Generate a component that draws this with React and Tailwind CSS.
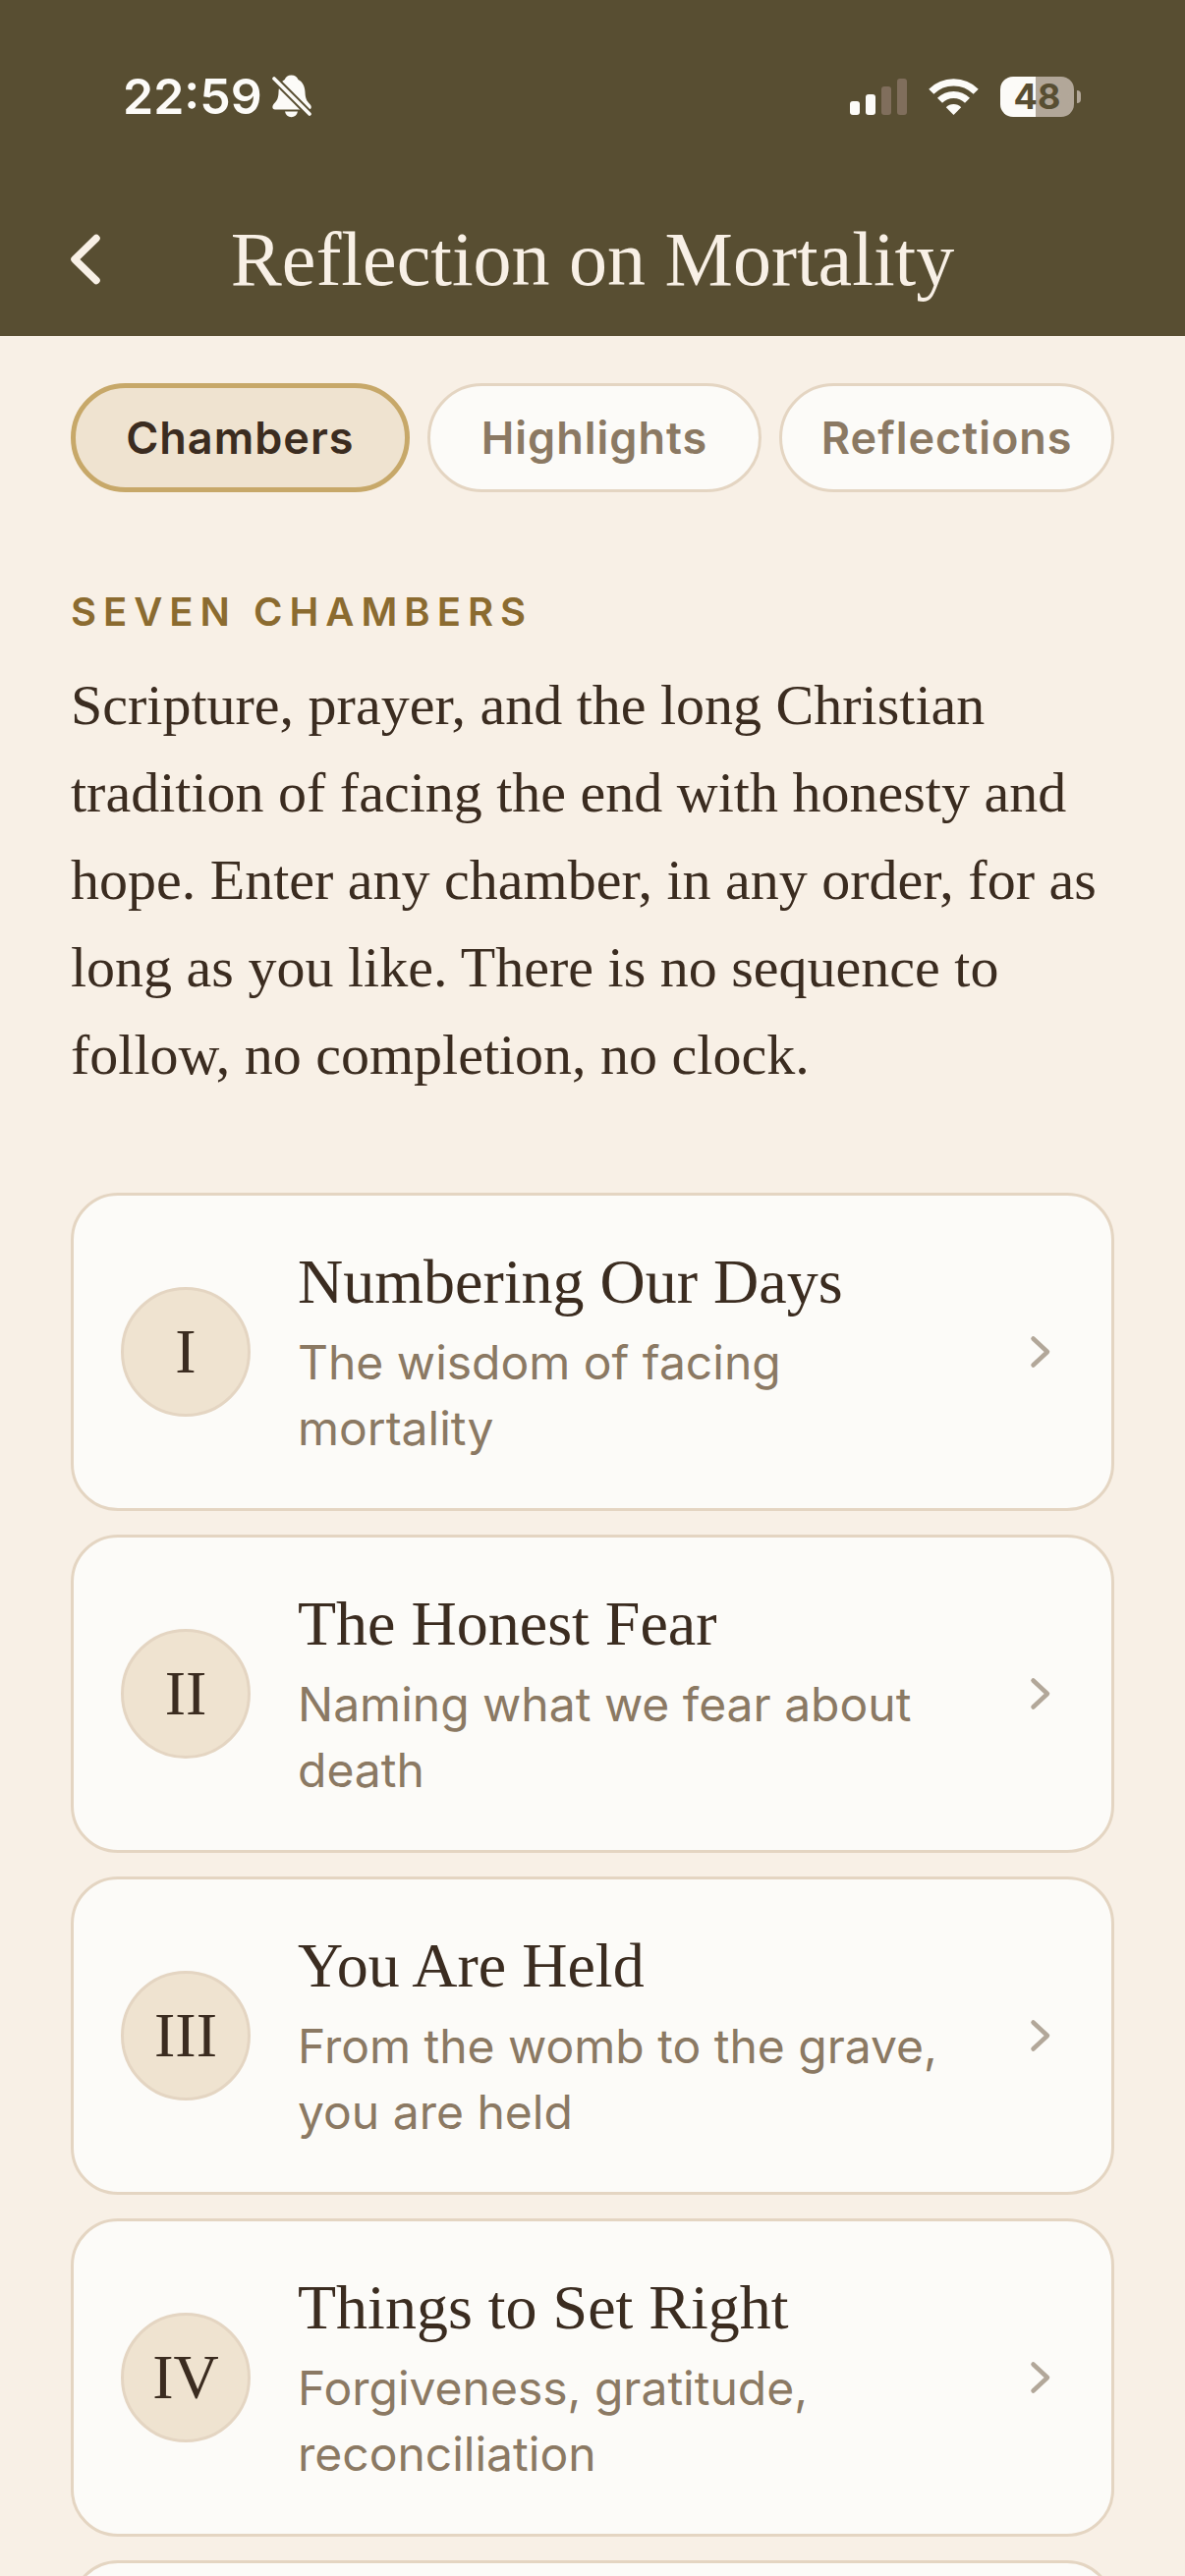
const tabs = ["Chambers", "Highlights", "Reflections"];

const chambers = [
  { numeral: "I", title: "Numbering Our Days", subtitle: "The wisdom of facing mortality" },
  { numeral: "II", title: "The Honest Fear", subtitle: "Naming what we fear about death" },
  { numeral: "III", title: "You Are Held", subtitle: "From the womb to the grave, you are held" },
  { numeral: "IV", title: "Things to Set Right", subtitle: "Forgiveness, gratitude, reconciliation" },
  { numeral: "", title: "", subtitle: "" },
];

function BellOff() {
  return (
    <svg className="h-[44px] w-[40px]" viewBox="0 0 40 44" aria-label="Silent mode">
      <mask id="bell-cut">
        <rect width="40" height="44" fill="white" />
        <path d="M2 4 38 40" stroke="black" strokeWidth="7.600" />
      </mask>
      <g fill="#fcfbf8">
        <path
          mask="url(#bell-cut)"
          d="M19.500 0.500c-3.600 0-5.800 1.800-6.800 4.500C8.600 7 6.700 12.500 6.500 18c-.2 5.500-1.200 8-4.200 11C-.2 31.500-.6 35.400 3 35.400h34c3.200 0 3.600-3 1.300-5.400-3.200-3.200-4.600-6-4.800-12-.2-6-2.600-11-7-13-1-2.700-3.400-4.500-7-4.500Z"
        />
        <path d="M13 37.500h13c-.8 3.600-3.200 5.700-6.500 5.700s-5.700-2.100-6.500-5.700Z" />
        <path d="M2 4 38 40" stroke="#fcfbf8" strokeWidth="3.600" strokeLinecap="round" />
      </g>
    </svg>
  );
}

function Signal() {
  return (
    <svg className="h-[37px] w-[58px]" viewBox="0 0 58 37" aria-label="Signal strength">
      <g fill="#fcfbf8">
        <rect x="0" y="23" width="10" height="14" rx="3" />
        <rect x="16" y="16" width="10" height="21" rx="3" />
      </g>
      <g fill="#806e5c">
        <rect x="32" y="8" width="10" height="29" rx="3" />
        <rect x="48" y="0" width="10" height="37" rx="3" />
      </g>
    </svg>
  );
}

function Wifi() {
  return (
    <svg className="h-[37px] w-[51px]" viewBox="0 0 51 37" fill="none" aria-label="Wi-Fi">
      <path d="M2.800 13.300a32 32 0 0 1 45.400 0" stroke="#fcfbf8" strokeWidth="7.200" />
      <path d="M11.500 22.300a19.600 19.600 0 0 1 28 0" stroke="#fcfbf8" strokeWidth="7" />
      <path d="M25.500 37 17.800 29.200a11 11 0 0 1 15.400 0Z" fill="#fcfbf8" />
    </svg>
  );
}

function Battery() {
  return (
    <div className="flex items-center gap-[3px]">
      <div className="flex h-[41px] w-[75px] items-center justify-center rounded-[13px] bg-linear-to-r from-[#fcfbf8] from-48% to-[#b2a799] to-48% text-[36px] leading-none font-bold text-[#584e32]">
        48
      </div>
      <div className="h-[13px] w-[4px] rounded-r-full bg-[#b2a799]" />
    </div>
  );
}

export default function App() {
  return (
    <div className="flex h-screen flex-col bg-[#f8f0e6] font-['Inter',sans-serif] text-[#3b2c20]">
      <header className="bg-[#584e32]">
        <div className="flex h-[196px] items-center justify-between pr-[106px] pl-[125px]">
          <div className="flex items-center gap-[10px]">
            <span className="text-[50px] leading-none font-semibold text-[#fcfbf8]">22:59</span>
            <BellOff />
          </div>
          <div className="flex items-center gap-[22px]">
            <Signal />
            <Wifi />
            <Battery />
          </div>
        </div>
        <div className="grid h-[146px] grid-cols-[60px_1fr_60px] items-center px-[72px] pb-[10px]">
          <button type="button" aria-label="Back" className="flex h-[60px] items-center">
            <svg className="h-[52px] w-[30px]" viewBox="0 0 30 52" fill="none">
              <path
                d="M26 4.500 4 26 26 47.500"
                stroke="#f8f0e6"
                strokeWidth="7.500"
                strokeLinecap="round"
                strokeLinejoin="round"
              />
            </svg>
          </button>
          <h1 className="text-center font-['Liberation_Serif',serif] text-[78px] leading-[88px] whitespace-nowrap text-[#f8f0e6]">
            Reflection on Mortality
          </h1>
        </div>
      </header>

      <main className="min-h-0 flex-1 overflow-y-auto px-[72px] pt-12 [scrollbar-width:none]">
        <nav className="flex gap-[18px]" aria-label="Sections">
          {tabs.map((tab, i) => (
            <button
              key={tab}
              type="button"
              aria-pressed={i === 0}
              className={
                i === 0
                  ? "h-[111px] flex-1 rounded-full border-5 border-[#c7a869] bg-[#efe3d0] text-[45px] font-semibold tracking-[1px] text-[#3b2c20]"
                  : "h-[111px] flex-1 rounded-full border-3 border-[#e4d5c2] bg-[#fcfbf8] text-[45px] font-semibold tracking-[1px] text-[#8b7963]"
              }
            >
              {tab}
            </button>
          ))}
        </nav>

        <h2 className="mt-24 text-[40px] leading-[52px] font-semibold tracking-[7px] text-[#8b6b30] uppercase">
          Seven Chambers
        </h2>
        <p className="mt-6 font-['Liberation_Serif',serif] text-[58px] leading-[89px]">
          Scripture, prayer, and the long Christian tradition of facing the end with honesty and
          hope. Enter any chamber, in any order, for as long as you like. There is no sequence to
          follow, no completion, no clock.
        </p>

        <ul className="mt-24 flex flex-col gap-6">
          {chambers.map((c, i) => (
            <li key={i}>
              <a
                href="#"
                className="flex items-center gap-12 rounded-[48px] border-3 border-[#e4d5c2] bg-[#fcfbf8] p-12"
              >
                <span className="flex size-[132px] shrink-0 items-center justify-center rounded-full border-3 border-[#e4d5c2] bg-[#efe3d0] font-['Liberation_Serif',serif] text-[64px] leading-none">
                  {c.numeral}
                </span>
                <span className="flex min-w-0 flex-1 flex-col gap-2">
                  <span className="font-['Liberation_Serif',serif] text-[64px] leading-[80px]">
                    {c.title}
                  </span>
                  <span className="text-[48px] leading-[67px] text-[#8b7963]">{c.subtitle}</span>
                </span>
                <svg className="size-12 shrink-0" viewBox="0 0 48 48" fill="none" aria-hidden="true">
                  <path
                    d="M16.500 10.500 31 24 16.500 37.500"
                    stroke="#b2a799"
                    strokeWidth="4.500"
                    strokeLinecap="round"
                    strokeLinejoin="round"
                  />
                </svg>
              </a>
            </li>
          ))}
        </ul>
      </main>
    </div>
  );
}
